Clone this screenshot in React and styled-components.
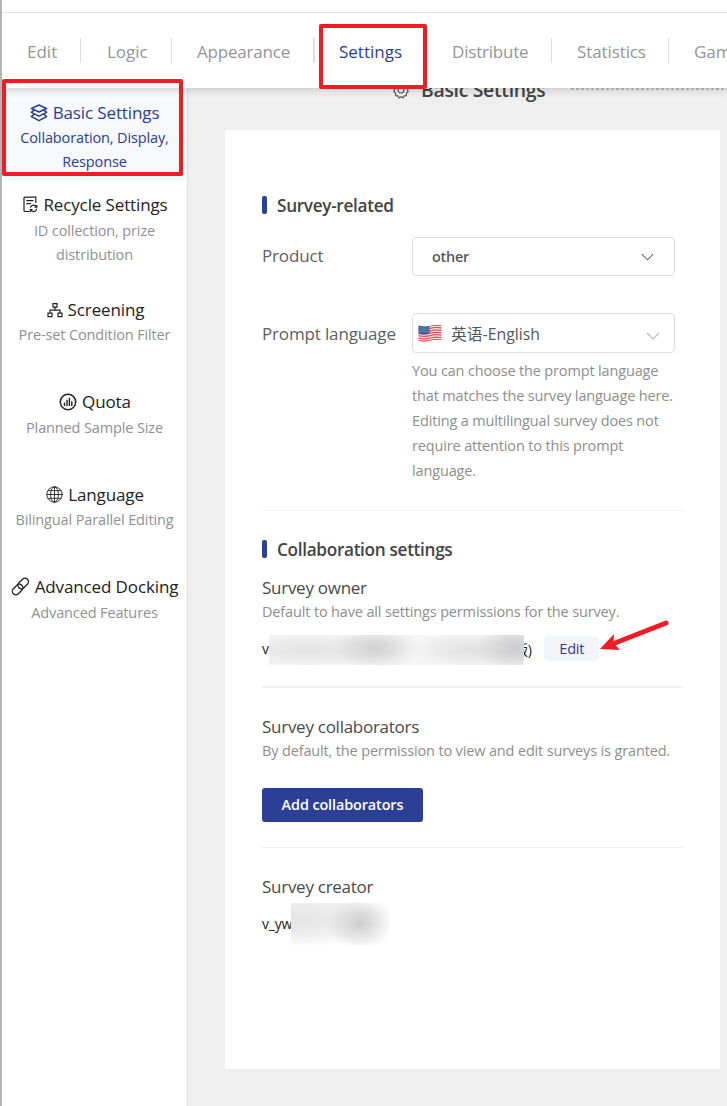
import React from 'react';
import styled, { createGlobalStyle, css } from 'styled-components';

const Global = createGlobalStyle`
  * { box-sizing: border-box; }
  body {
    margin: 0;
    background: #efefef;
    font-family: 'Open Sans', 'Noto Sans', 'Noto Sans CJK SC', sans-serif;
    color: #444;
    overflow: hidden;
  }
`;

const Page = styled.div`
  position: relative;
  width: 727px;
  height: 1106px;
  overflow: hidden;
  display: flex;
  flex-direction: column;
  border-left: 2px solid #b4b4b4;
`;

const Header = styled.header`
  position: relative;
  z-index: 2;
  flex: none;
  height: 88px;
  padding-top: 12px;
  background: #fff;
  box-shadow: 0 2px 8px rgba(0, 0, 0, 0.16);
`;

const Tabs = styled.nav`
  display: flex;
  align-items: center;
  height: 76px;
  border-top: 1px solid #e3e3e4;
`;

const Tab = styled.div`
  flex: none;
  width: ${(p) => p.$width}px;
  height: 25px;
  padding-left: ${(p) => p.$inset}px;
  line-height: 28px;
  font-size: 17px;
  letter-spacing: ${(p) => p.$track || 0}px;
  white-space: nowrap;
  color: ${(p) => (p.$active ? '#2b3e94' : '#939599')};
  border-right: ${(p) => p.$rule || 0}px solid #dcdfe8;
`;

const Body = styled.div`
  flex: 1;
  display: flex;
  min-height: 0;
`;

const Sidebar = styled.aside`
  flex: none;
  width: 186px;
  background: #fff;
  border-right: 1px solid #dcdfe6;
`;

const NavItem = styled.div`
  height: ${(p) => p.$height}px;
  padding-top: ${(p) => p.$top}px;
  text-align: center;
  color: #8f9194;
  ${(p) =>
    p.$active &&
    css`
      background: #f7f8fa;
      color: #2b3e94;
    `}
`;

const NavTitle = styled.div`
  display: flex;
  align-items: center;
  justify-content: center;
  gap: 5px;
  height: 25px;
  padding-left: ${(p) => p.$shift || 0}px;
  line-height: 25px;
  font-size: 17px;
  letter-spacing: -0.12px;
  white-space: nowrap;
  color: ${(p) => (p.$active ? '#2b3e94' : '#222')};
  svg { flex: none; }
`;

const NavNote = styled.div`
  padding-top: ${(p) => p.$gap}px;
  line-height: 24px;
  font-size: 14.5px;
  letter-spacing: -0.13px;
  white-space: pre-line;
`;

const Main = styled.main`
  flex: 1;
  min-width: 0;
  padding-left: 37px;
`;

const PageTitle = styled.div`
  display: flex;
  align-items: center;
  height: 42px;
  margin-left: 167px;
  padding-bottom: 38px;
`;

const TitleText = styled.h1`
  margin: 0 26px 0 11px;
  font-size: 19.4px;
  line-height: 26px;
  font-weight: 600;
  letter-spacing: -0.3px;
  white-space: nowrap;
  color: #444;
`;

const Dots = styled.div`
  flex: 1;
  height: 2px;
  margin-top: -2px;
  background: repeating-linear-gradient(90deg, #bdbdbd 0 3px, transparent 3px 5px);
`;

const Card = styled.section`
  width: 495px;
  height: 939px;
  padding: 66px 37px 0;
  background: #fff;
`;

const SectionTitle = styled.h2`
  display: flex;
  align-items: center;
  gap: 10px;
  height: 20px;
  margin: ${(p) => p.$top || 0}px 0 0;
  line-height: 22px;
  font-size: 17.2px;
  font-weight: 600;
  letter-spacing: -0.32px;
  white-space: nowrap;
  color: #444;
  &::before {
    content: '';
    width: 5px;
    height: 18px;
    margin-bottom: 2px;
    border-radius: 2px;
    background: #2d3f97;
  }
`;

const Field = styled.div`
  display: grid;
  grid-template-columns: 150px 263px;
  margin-top: ${(p) => p.$top}px;
`;

const Label = styled.div`
  line-height: ${(p) => p.$line}px;
  font-size: 17px;
  letter-spacing: -0.15px;
  white-space: nowrap;
  color: #5e6063;
`;

const Select = styled.div`
  display: flex;
  align-items: center;
  height: ${(p) => (p.$flag ? 40 : 39)}px;
  padding: ${(p) => (p.$flag ? '1px 14px 0 5px' : '0 20px 0 19px')};
  border: 1px solid #dcdce4;
  border-radius: 4px;
  font-size: ${(p) => (p.$flag ? 15.8 : 14.4)}px;
  font-weight: ${(p) => (p.$flag ? 400 : 600)};
  letter-spacing: ${(p) => (p.$flag ? 0 : -0.2)}px;
  line-height: 20px;
  color: #55575b;
`;

const Value = styled.span`
  flex: 1;
  margin-left: ${(p) => p.$gap || 0}px;
  padding-top: 1px;
  white-space: nowrap;
`;

const Help = styled.p`
  margin: 5px 0 0;
  line-height: 25px;
  font-size: 14.5px;
  letter-spacing: -0.15px;
  white-space: pre-line;
  color: #8e8e8e;
`;

const Rule = styled.hr`
  height: ${(p) => p.$weight || 1}px;
  margin: ${(p) => p.$top}px 0 0;
  border: 0;
  background: #f0f0f1;
`;

const Heading = styled.h3`
  margin: ${(p) => p.$top}px 0 1px;
  line-height: 23px;
  font-size: 17px;
  font-weight: 400;
  letter-spacing: -0.27px;
  color: #48494c;
`;

const Note = styled.p`
  margin: 0;
  line-height: 24px;
  font-size: 14.5px;
  letter-spacing: -0.15px;
  white-space: nowrap;
  color: #8e8e8e;
`;

const Person = styled.div`
  position: relative;
  display: flex;
  align-items: center;
  height: 30px;
  margin-top: ${(p) => p.$top}px;
  padding-bottom: ${(p) => p.$lift || 0}px;
  font-size: 14px;
  letter-spacing: -0.2px;
  color: #222;
`;

const OwnerTail = styled.span`
  width: 263px;
  margin-right: 12px;
  text-align: right;
`;

const Smudge = styled.div`
  position: absolute;
  left: ${(p) => p.$left}px;
  top: ${(p) => p.$top}px;
  width: ${(p) => p.$width}px;
  height: ${(p) => p.$height}px;
  background: ${(p) => p.$paint};
`;

const EditButton = styled.button`
  width: 55px;
  height: 25px;
  padding: 0 0 1px 1px;
  border: 0;
  border-radius: 5px;
  background: #f4f5fa;
  font: 400 14.6px/23px 'Open Sans', sans-serif;
  letter-spacing: -0.2px;
  color: #2b3e94;
`;

const AddButton = styled.button`
  display: block;
  width: 161px;
  height: 34px;
  margin-top: 25px;
  padding: 0;
  border: 0;
  border-radius: 3px;
  background: #2c3f96;
  font: 600 14.4px/34px 'Open Sans', sans-serif;
  letter-spacing: -0.1px;
  color: #fff;
`;

const Outline = styled.div`
  position: absolute;
  z-index: 3;
  left: ${(p) => p.$left}px;
  top: ${(p) => p.$top}px;
  width: ${(p) => p.$width}px;
  height: ${(p) => p.$height}px;
  border: 4px solid #ee1c25;
  border-radius: 2px;
`;

const ArrowSvg = styled.svg`
  position: absolute;
  z-index: 3;
  left: 595px;
  top: 616px;
`;

const line = { fill: 'none', stroke: 'currentColor', strokeLinejoin: 'round', strokeLinecap: 'round' };

const LayersIcon = () => (
  <svg width="18" height="18" viewBox="0 0 18 18" {...line} strokeWidth="1.5">
    <path d="M9 1 16.600 4.500 9 8 1.400 4.500Z" />
    <path d="M3.800 6.400 1.400 8.400 9 12.200 16.600 8.400 14.200 6.400M3.800 10.600 1.400 12.600 9 16.600 16.600 12.600 14.200 10.600" />
  </svg>
);
const RecycleIcon = () => (
  <svg width="15" height="17" viewBox="0 0 15 17" {...line} strokeWidth="1.2">
    <path d="M6 15.500H2.200Q1 15.500 1 14.500V2.200Q1 1.200 2 1.200H12.800V6.500M3.800 4.700H10M3.800 7.700H7.500" />
    <path d="M7.500 11.200A3.300 3.300 0 0 1 13.500 11M13.700 13.200A3.300 3.300 0 0 1 7.600 13.800M13.800 9.300V11.200H12M7.300 15.500V13.600H9" />
  </svg>
);
const TreeIcon = () => (
  <svg width="16" height="16" viewBox="0 0 16 16" fill="none" stroke="currentColor" strokeWidth="1.2">
    <path d="M6 1.600H10V5.200H6ZM1 11.200H5V14.600H1ZM11 11.200H15V14.600H11ZM8 5.200V8.100M3 11.200V8.100H13V11.200" />
  </svg>
);
const QuotaIcon = () => (
  <svg width="18" height="18" viewBox="0 0 18 18" {...line}>
    <circle cx="9" cy="9" r="7.700" strokeWidth="1.500" />
    <path d="M5.500 9.500V13M8 6.800V13M10.400 4.800V13M12.800 8.200V13" strokeWidth="1.400" strokeLinecap="butt" />
  </svg>
);
const GlobeIcon = () => (
  <svg width="17" height="17" viewBox="0 0 17 17" {...line} strokeWidth=".9">
    <circle cx="8.500" cy="8.500" r="7.700" />
    <ellipse cx="8.500" cy="8.500" rx="3.900" ry="7.700" />
    <path d="M8.500 .8V16.200M.8 8.500H16.200M2 4.700H15M2 12.300H15" />
  </svg>
);
const LinkIcon = () => (
  <svg width="19" height="19" viewBox="0 0 19 19" {...line} strokeWidth="1.300">
    <rect x="-6" y="-3.500" width="12" height="7" rx="3.500" transform="translate(12.200 6.500) rotate(-45)" />
    <rect x="-6" y="-3.500" width="12" height="7" rx="3.500" transform="translate(6.600 12.500) rotate(-45)" />
  </svg>
);
const GearIcon = () => (
  <svg width="18" height="18" viewBox="0 0 18 18" {...line} strokeWidth="1.200" color="#555">
    <path d="M7 1.200H11L11.600 3.400 13.900 2.900 17 6.800 15.200 8.800 16.300 10.600 14.500 12 14.300 14.600 12.200 14.800 11 16.900 9 15.800 7 16.900 5.800 14.800 3.700 14.600 3.500 12 1.700 10.600 2.800 8.800 1 6.800 4.100 2.900 6.400 3.400Z" />
    <circle cx="9" cy="9" r="3" />
  </svg>
);
const Chevron = ({ width, color, drop = 0 }) => (
  <svg width={width} height={8 + drop * 2} viewBox={`0 ${-drop * 2} 14 ${8 + drop * 2}`} fill="none" stroke={color} strokeWidth="1.200">
    <path d="M1 1 7 7 13 1" />
  </svg>
);
const FlagIcon = () => (
  <svg width="24" height="19" viewBox="0 0 24 19">
    <defs>
      <clipPath id="flag">
        <path d="M.5 1.500Q6 3.500 12 1.700T23.500 1.200V16Q18 15 12 16.700T.5 17Z" />
      </clipPath>
    </defs>
    <g clipPath="url(#flag)">
      <rect width="24" height="19" fill="#f7e8e9" />
      <g fill="none" stroke="#e05058" strokeWidth="1.250">
        {[2, 4.400, 6.800, 9.200, 11.600, 14, 16.400].map((y) => (
          <path key={y} d={`M0 ${y}Q6 ${y + 1.700} 12 ${y}T24 ${y - 0.300}`} />
        ))}
      </g>
      <path d="M0 0H11.500V9.800Q6 11 0 10Z" fill="#3a6498" />
      <g fill="none" stroke="#a9c0da" strokeWidth=".8" strokeDasharray=".8 1.200">
        <path d="M1.500 4H11M2.300 5.800H11M1.500 7.600H11" />
      </g>
    </g>
  </svg>
);

const tabs = [
  { text: 'Edit', width: 79, inset: 25, rule: 1 },
  { text: 'Logic', width: 91, inset: 26, rule: 1 },
  { text: 'Appearance', width: 143, inset: 25, rule: 2, track: -0.2 },
  { text: 'Settings', width: 111, inset: 24, active: true },
  { text: 'Distribute', width: 126, inset: 26, rule: 1, track: -0.2 },
  { text: 'Statistics', width: 117, inset: 25, rule: 1, track: -0.1 },
  { text: 'Game', width: 100, inset: 25 },
];

const items = [
  { title: 'Basic Settings', note: 'Collaboration, Display,\nResponse', icon: LayersIcon, height: 93, top: 12, gap: 1, active: true },
  { title: 'Recycle Settings', note: 'ID collection, prize\ndistribution', icon: RecycleIcon, height: 105, top: 11, gap: 2, shift: 2 },
  { title: 'Screening', note: 'Pre-set Condition Filter', icon: TreeIcon, height: 92, top: 11, gap: 1, shift: 2 },
  { title: 'Quota', note: 'Planned Sample Size', icon: QuotaIcon, height: 93, top: 11, gap: 2, shift: 1 },
  { title: 'Language', note: 'Bilingual Parallel Editing', icon: GlobeIcon, height: 92, top: 11, gap: 1, shift: 1 },
  { title: 'Advanced Docking', note: 'Advanced Features', icon: LinkIcon, height: 92, top: 11, gap: 2 },
];

const ownerPaint =
  'radial-gradient(ellipse 44px 22px at 106px 13px, #d0d0d0, rgba(208,208,208,0)), radial-gradient(ellipse 40px 26px at 246px 13px, #cacaca, rgba(202,202,202,0)), radial-gradient(ellipse 90px 18px at 40px 15px, #e2e2e2, rgba(226,226,226,0)), radial-gradient(ellipse 60px 18px at 200px 15px, #e0e0e0, rgba(224,224,224,0)), #f6f6f6';
const creatorPaint =
  'radial-gradient(ellipse 34px 27px at 69px 20px, #cecece, rgba(206,206,206,0)), radial-gradient(ellipse 84px 27px at 8px 18px, #e4e4e4, rgba(228,228,228,0)), radial-gradient(ellipse 100px 44px at 0 0, #efefef, #fff)';

export default function App() {
  return (
    <>
      <Global />
      <Page>
        <Header>
          <Tabs>
            {tabs.map((t) => (
              <Tab key={t.text} $width={t.width} $inset={t.inset} $rule={t.rule} $track={t.track} $active={t.active}>
                {t.text}
              </Tab>
            ))}
          </Tabs>
        </Header>
        <Body>
          <Sidebar>
            {items.map(({ title, note, icon: Icon, height, top, gap, shift, active }) => (
              <NavItem key={title} $height={height} $top={top} $active={active}>
                <NavTitle $active={active} $shift={shift}>
                  <Icon />
                  {title}
                </NavTitle>
                <NavNote $gap={gap}>{note}</NavNote>
              </NavItem>
            ))}
          </Sidebar>
          <Main>
            <PageTitle>
              <GearIcon />
              <TitleText>Basic Settings</TitleText>
              <Dots />
            </PageTitle>
            <Card>
              <SectionTitle>Survey-related</SectionTitle>
              <Field $top={21}>
                <Label $line={38}>Product</Label>
                <Select>
                  <Value>other</Value>
                  <Chevron width={13} color="#666" />
                </Select>
              </Field>
              <Field $top={37}>
                <Label $line={41}>Prompt language</Label>
                <div>
                  <Select $flag>
                    <FlagIcon />
                    <Value $gap={9}>英语-English</Value>
                    <Chevron width={14} color="#b9bcc4" drop={2} />
                  </Select>
                  <Help>
                    {'You can choose the prompt language\nthat matches the survey language here.\nEditing a multilingual survey does not\nrequire attention to this prompt\nlanguage.'}
                  </Help>
                </div>
              </Field>
              <Rule $top={27} />
              <SectionTitle $top={29}>Collaboration settings</SectionTitle>
              <Heading $top={16}>Survey owner</Heading>
              <Note>Default to have all settings permissions for the survey.</Note>
              <Person $top={11} $lift={3}>
                v
                <OwnerTail>版)</OwnerTail>
                <Smudge $left={7} $top={0} $width={255} $height={30} $paint={ownerPaint} />
                <EditButton>Edit</EditButton>
              </Person>
              <Rule $top={21} $weight={2} />
              <Heading $top={27}>Survey collaborators</Heading>
              <Note>By default, the permission to view and edit surveys is granted.</Note>
              <AddButton>Add collaborators</AddButton>
              <Rule $top={25} />
              <Heading $top={27}>Survey creator</Heading>
              <Person $top={10}>
                v_yw
                <Smudge $left={29} $top={-5} $width={99} $height={42} $paint={creatorPaint} />
              </Person>
            </Card>
          </Main>
        </Body>
        <Outline $left={317} $top={24} $width={108} $height={65} />
        <Outline $left={0} $top={79} $width={181} $height={97} />
        <ArrowSvg width="76" height="40" viewBox="0 0 76 40">
          <path d="M18 27 69 7" stroke="#ee1c25" strokeWidth="5" strokeLinecap="round" />
          <path d="M3 33 17 18 16.500 27 23 34Z" fill="#ee1c25" />
        </ArrowSvg>
      </Page>
    </>
  );
}
